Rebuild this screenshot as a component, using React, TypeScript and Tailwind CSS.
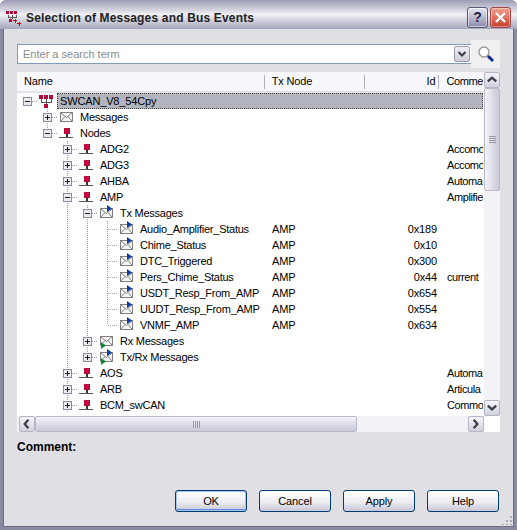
import React from 'react';

const font = 'font-["Liberation_Sans",Arial,sans-serif]';

type Kind = 'net' | 'node' | 'mail' | 'tx' | 'rx' | 'txrx';

type Row = {
  cells: string[];
  icon: Kind;
  name: string;
  tx?: string;
  id?: string;
  comment?: string;
};

const msg = [' ', ' ', '|', '|', 'tee'];
const node = [' ', ' ', 'plus'];

const rows: Row[] = [
  { cells: [' ', 'plus'], icon: 'mail', name: 'Messages' },
  { cells: [' ', 'minusEnd'], icon: 'node', name: 'Nodes' },
  { cells: node, icon: 'node', name: 'ADG2', comment: 'Accomo' },
  { cells: node, icon: 'node', name: 'ADG3', comment: 'Accomo' },
  { cells: node, icon: 'node', name: 'AHBA', comment: 'Automa' },
  { cells: [' ', ' ', 'minus'], icon: 'node', name: 'AMP', comment: 'Amplifie' },
  { cells: [' ', ' ', '|', 'minus'], icon: 'tx', name: 'Tx Messages' },
  { cells: msg, icon: 'tx', name: 'Audio_Amplifier_Status', tx: 'AMP', id: '0x189' },
  { cells: msg, icon: 'tx', name: 'Chime_Status', tx: 'AMP', id: '0x10' },
  { cells: msg, icon: 'tx', name: 'DTC_Triggered', tx: 'AMP', id: '0x300' },
  { cells: msg, icon: 'tx', name: 'Pers_Chime_Status', tx: 'AMP', id: '0x44', comment: 'current' },
  { cells: msg, icon: 'tx', name: 'USDT_Resp_From_AMP', tx: 'AMP', id: '0x654' },
  { cells: msg, icon: 'tx', name: 'UUDT_Resp_From_AMP', tx: 'AMP', id: '0x554' },
  { cells: [' ', ' ', '|', '|', 'elbow'], icon: 'tx', name: 'VNMF_AMP', tx: 'AMP', id: '0x634' },
  { cells: [' ', ' ', '|', 'plus'], icon: 'rx', name: 'Rx Messages' },
  { cells: [' ', ' ', '|', 'plusEnd'], icon: 'txrx', name: 'Tx/Rx Messages' },
  { cells: node, icon: 'node', name: 'AOS', comment: 'Automa' },
  { cells: node, icon: 'node', name: 'ARB', comment: 'Articula' },
  { cells: node, icon: 'node', name: 'BCM_swCAN', comment: 'Commo' },
];

function Guide({ type }: { type: string }) {
  const dots = '#a0a0a0';
  const box = type.startsWith('plus') || type.startsWith('minus');
  const full = type === '|' || type === 'tee' || type === 'plus' || type === 'minus';
  const top = type === 'elbow' || type === 'plusEnd' || type === 'minusEnd';
  return (
    <svg width="20" height="16" viewBox="0 0 20 16" shapeRendering="crispEdges" className="shrink-0">
      {full && <line x1="10.5" y1="0" x2="10.5" y2="16" stroke={dots} strokeDasharray="1 1" />}
      {top && <line x1="10.5" y1="0" x2="10.5" y2="8" stroke={dots} strokeDasharray="1 1" />}
      {type === 'root' && <line x1="15" y1="8.5" x2="20" y2="8.5" stroke={dots} strokeDasharray="1 1" />}
      {(type === 'tee' || type === 'elbow' || box) && (
        <line x1="11" y1="8.5" x2="20" y2="8.5" stroke={dots} strokeDasharray="1 1" />
      )}
      {(box || type === 'root') && (
        <g>
          <rect x="6.500" y="4.500" width="8" height="8" rx="1" fill="#e8e8ee" stroke="#8c8c9c" />
          <line x1="8" y1="8.500" x2="13" y2="8.500" stroke="#222" />
          {type.startsWith('plus') && <line x1="10.500" y1="6" x2="10.500" y2="11" stroke="#222" />}
        </g>
      )}
    </svg>
  );
}

function TreeIcon({ kind }: { kind: Kind }) {
  if (kind === 'net') {
    return (
      <svg width="15" height="14" viewBox="0 0 15 14" className="ml-[2px] shrink-0" shapeRendering="crispEdges">
        <path d="M2.500 5v3.500h10V5M7.500 5v5" fill="none" stroke="#555" />
        <rect x="0" y="1" width="4" height="4" fill="#b3073a" />
        <rect x="5" y="1" width="4" height="4" fill="#b3073a" />
        <rect x="10" y="1" width="4" height="4" fill="#b3073a" />
        <rect x="5" y="10" width="4" height="4" fill="#b3073a" />
      </svg>
    );
  }
  if (kind === 'node') {
    return (
      <svg width="15" height="14" viewBox="0 0 15 14" className="ml-[2px] shrink-0" shapeRendering="crispEdges">
        <rect x="5" y="2" width="6" height="6" fill="#c0083c" />
        <rect x="7" y="8" width="2" height="3" fill="#333" />
        <rect x="0" y="11" width="14" height="1" fill="#555" />
      </svg>
    );
  }
  return (
    <svg width="15" height="16" viewBox="0 0 15 16" className="ml-[3px] shrink-0">
      <rect x="0.500" y="3.500" width="12" height="9" fill="#f6f6f6" stroke="#808080" shapeRendering="crispEdges" />
      <path d="M1 4l5.500 4.500L12 4M1 12l4-4.500M12 12l-4-4.500" fill="none" stroke="#808080" />
      {(kind === 'tx' || kind === 'txrx') && <path d="M7 0v7l5-3.500z" fill="#0c3fa8" />}
      {(kind === 'rx' || kind === 'txrx') && <path d="M1 9v7l5-3.500z" fill="#0d8a3c" />}
    </svg>
  );
}

function TreeRow({ row }: { row: Row }) {
  return (
    <div className="flex h-4 items-center whitespace-nowrap">
      <div className="flex w-[247px] shrink-0 items-center tracking-[-0.25px]">
        {row.cells.map((c, i) => (
          <Guide key={i} type={c} />
        ))}
        <span className="flex w-[23px] shrink-0"><TreeIcon kind={row.icon} /></span>
        <span>{row.name}</span>
      </div>
      <span className="w-[100px] shrink-0 pl-[8px]">{row.tx}</span>
      <span className="w-[73px] shrink-0 text-right">{row.id}</span>
      <span className="shrink-0 pl-[10px] tracking-[-0.4px]">{row.comment}</span>
    </div>
  );
}

function ScrollButton({ dir, className }: { dir: 'up' | 'down' | 'left' | 'right'; className?: string }) {
  const paths = {
    up: 'M3 9l4.500-4 4.500 4',
    down: 'M3 5l4.500 4 4.500-4',
    left: 'M9 3l-4 4.500 4 4.500',
    right: 'M5 3l4 4.500-4 4.500',
  };
  return (
    <div className={`flex h-[16px] w-[16px] shrink-0 items-center justify-center rounded-[2px] border border-[#b4b4c4] bg-gradient-to-b from-[#f4f4f8] to-[#d2d2de] ${className ?? ''}`}>
      <svg width="14" height="14" viewBox="0 0 15 15">
        <path d={paths[dir]} fill="none" stroke="#3c3c46" strokeWidth="2.400" />
      </svg>
    </div>
  );
}

function DialogButton({ label, primary }: { label: string; primary?: boolean }) {
  return (
    <button className={`flex h-[22px] w-[72px] items-center justify-center rounded-[3px] border border-[#003c74] bg-gradient-to-b from-white via-[#f0f0f4] to-[#c8c8d8] text-black ${primary ? 'shadow-[inset_0_0_0_1px_#a8c4ec,inset_0_-1px_0_1px_#5a8ce0]' : ''}`}>
      {label}
    </button>
  );
}

export default function App() {
  return (
    <div className={`${font} flex h-[530px] w-[517px] flex-col overflow-hidden rounded-t-[6px] bg-[#8a8aa2] text-[11px] tracking-[-0.15px] text-black`}>
      {/* title bar */}
      <div className="flex h-[29px] shrink-0 items-center bg-gradient-to-b from-[#9c9cb4] via-[#f0f0f5] to-[#a6a6bc] pl-[6px] pr-[6px] pt-[6px]">
        <svg width="16" height="16" viewBox="0 0 16 16" shapeRendering="crispEdges" className="shrink-0">
          <path d="M2 5v2.500h8V5M6 5v4" fill="none" stroke="#555" />
          <rect x="0" y="1" width="3" height="3" fill="#b3073a" />
          <rect x="4" y="1" width="3" height="3" fill="#b3073a" />
          <rect x="8" y="1" width="3" height="3" fill="#b3073a" />
          <rect x="3" y="9" width="3" height="3" fill="#b3073a" />
          <path d="M7 10.500h4M9.500 8.500v4M11 13.500h4M13.500 11.500v4" stroke="#c00" />
        </svg>
        <span className="ml-[4px] flex-1 text-[12px] font-bold tracking-[0.17px] text-[#222]">Selection of Messages and Bus Events</span>
        <div className="flex h-[21px] w-[21px] items-center justify-center rounded-[3px] border border-[#5a5a78] bg-gradient-to-b from-[#e8e8f0] to-[#8c8cac] text-[14px] font-bold text-[#23234a] shadow-[inset_0_0_0_1px_#ffffff80]">?</div>
        <div className="ml-[2px] flex h-[21px] w-[21px] items-center justify-center rounded-[3px] border border-[#a04848] bg-gradient-to-b from-[#f0a090] to-[#c83c2c] shadow-[inset_0_0_0_1px_#ffffff60]">
          <svg width="13" height="13" viewBox="0 0 13 13"><path d="M2 2l9 9M11 2l-9 9" stroke="#fff" strokeWidth="2.400" /></svg>
        </div>
      </div>

      {/* dialog body */}
      <div className="relative mx-[3px] mb-[3px] flex flex-1 flex-col border-l border-r border-b border-[#6c6c84] bg-[#e0dfe3] pl-[13px] pr-[13px]">
        <div className="mt-[15px] flex h-[20px] items-center">
          <div className="flex h-[20px] w-[458px] items-center border border-[#7f9db9] bg-white pl-[5px] pr-[1px]">
            <span className="flex-1 tracking-normal text-[#8c8c8c]">Enter a search term</span>
            <div className="flex h-[16px] w-[16px] items-center justify-center rounded-[2px] border border-[#9a9aac] bg-gradient-to-b from-[#f0f0f4] to-[#d0d0dc]">
              <svg width="10" height="10" viewBox="0 0 10 10"><path d="M1.500 3l3.500 3.500L8.500 3" fill="none" stroke="#3c3c46" strokeWidth="2" /></svg>
            </div>
          </div>
          <div className="ml-[-1px] flex h-[28px] w-[29px] items-center justify-center bg-[#f0f0f0]">
            <svg width="20" height="20" viewBox="0 0 20 20">
              <circle cx="8" cy="8" r="5" fill="#fff" stroke="#9a9a9a" strokeWidth="1.400" />
              <path d="M12 12l5 5" stroke="#0c2a9c" strokeWidth="3" />
            </svg>
          </div>
        </div>

        {/* list */}
        <div className="mt-[8px] flex h-[360px] w-[483px] flex-col bg-white">
          <div className="flex min-h-0 flex-1">
            <div className="flex w-[466px] flex-col overflow-hidden">
              <div className="flex h-[21px] shrink-0 items-center border-b-2 border-[#e2e2ea] bg-[#f8f8fc]">
                <span className="w-[247px] pl-[7px]">Name</span>
                <span className="h-[14px] border-l border-[#b0b0c0]" />
                <span className="w-[99px] pl-[7px]">Tx Node</span>
                <span className="h-[14px] border-l border-[#b0b0c0]" />
                <span className="w-[74px] pr-[3px] text-right">Id</span>
                <span className="h-[14px] border-l border-[#b0b0c0]" />
                <span className="pl-[7px] whitespace-nowrap tracking-[-0.4px]">Comme</span>
              </div>
              <div className="flex h-4 items-center whitespace-nowrap">
                <Guide type="root" />
                <span className="flex w-[20px] shrink-0"><TreeIcon kind="net" /></span>
                <span className="flex h-4 flex-1 items-center border border-dotted border-[#444] bg-[#b2b4bf] pl-[2px]">SWCAN_V8_54Cpy</span>
              </div>
              {rows.map((row) => (
                <TreeRow key={row.name} row={row} />
              ))}
            </div>
            <div className="ml-[1px] flex w-[16px] flex-col bg-[#f3f3f7]">
              <ScrollButton dir="up" />
              <div className="flex h-[103px] w-[16px] items-center justify-center rounded-[2px] border border-[#b8b8c8] bg-gradient-to-r from-[#f4f4f8] to-[#c8c8d8]">
                <div className="h-[7px] w-[7px] bg-[repeating-linear-gradient(to_bottom,#9a9aa8_0,#9a9aa8_1px,transparent_1px,transparent_2px)]" />
              </div>
              <div className="flex-1" />
              <ScrollButton dir="down" />
            </div>
          </div>
          <div className="flex h-[16px] shrink-0">
            <div className="flex w-[467px] bg-[#f3f3f7] pl-[2px]">
              <ScrollButton dir="left" />
              <div className="flex w-[322px] items-center justify-center rounded-[2px] border border-[#b8b8c8] bg-gradient-to-b from-[#f4f4f8] to-[#c8c8d8]">
                <div className="h-[7px] w-[7px] bg-[repeating-linear-gradient(to_right,#9a9aa8_0,#9a9aa8_1px,transparent_1px,transparent_2px)]" />
              </div>
              <div className="flex-1" />
              <ScrollButton dir="right" />
            </div>
            <div className="w-[16px] bg-white" />
          </div>
        </div>

        <div className="mt-[6px] text-[12px] font-bold tracking-normal">Comment:</div>

        <div className="mt-[34px] flex justify-end gap-[12px] pr-[1px]">
          <DialogButton label="OK" primary />
          <DialogButton label="Cancel" />
          <DialogButton label="Apply" />
          <DialogButton label="Help" />
        </div>

        {/* resize grip */}
        <svg width="10" height="10" viewBox="0 0 10 10" shapeRendering="crispEdges" className="absolute bottom-[1px] right-[1px]">
          <path d="M8 1h2v2H8zM4 5h2v2H4zM8 5h2v2H8zM0 9h2v1H0zM4 9h2v1H4zM8 9h2v1H8z" fill="#a8a8b0" />
        </svg>
      </div>
    </div>
  );
}
